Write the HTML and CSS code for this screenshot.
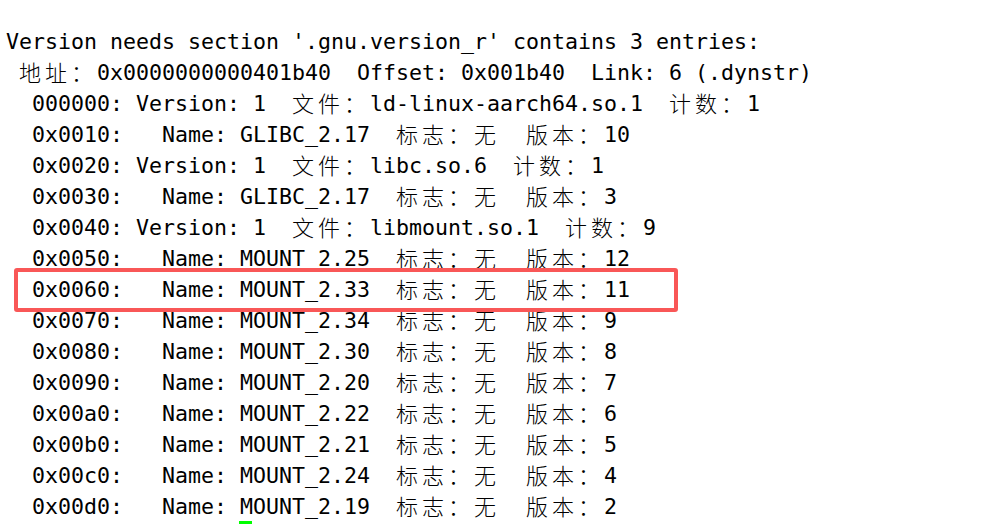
FILE: index.html
```html
<!DOCTYPE html>
<html>
<head>
<meta charset="utf-8">
<link rel="stylesheet" href="styles.css">
</head>
<body>
<div class="term">
<div class="ln">Version needs section '.gnu.version_r' contains 3 entries:</div>
<div class="ln"> <span class="w">地</span><span class="w">址</span><span class="w">：</span>0x0000000000401b40  Offset: 0x001b40  Link: 6 (.dynstr)</div>
<div class="ln">  000000: Version: 1  <span class="w">文</span><span class="w">件</span><span class="w">：</span>ld-linux-aarch64.so.1  <span class="w">计</span><span class="w">数</span><span class="w">：</span>1</div>
<div class="ln">  0x0010:   Name: GLIBC_2.17  <span class="w">标</span><span class="w">志</span><span class="w">：</span><span class="w">无</span>  <span class="w">版</span><span class="w">本</span><span class="w">：</span>10</div>
<div class="ln">  0x0020: Version: 1  <span class="w">文</span><span class="w">件</span><span class="w">：</span>libc.so.6  <span class="w">计</span><span class="w">数</span><span class="w">：</span>1</div>
<div class="ln">  0x0030:   Name: GLIBC_2.17  <span class="w">标</span><span class="w">志</span><span class="w">：</span><span class="w">无</span>  <span class="w">版</span><span class="w">本</span><span class="w">：</span>3</div>
<div class="ln">  0x0040: Version: 1  <span class="w">文</span><span class="w">件</span><span class="w">：</span>libmount.so.1  <span class="w">计</span><span class="w">数</span><span class="w">：</span>9</div>
<div class="ln">  0x0050:   Name: MOUNT_2.25  <span class="w">标</span><span class="w">志</span><span class="w">：</span><span class="w">无</span>  <span class="w">版</span><span class="w">本</span><span class="w">：</span>12</div>
<div class="ln">  0x0060:   Name: MOUNT_2.33  <span class="w">标</span><span class="w">志</span><span class="w">：</span><span class="w">无</span>  <span class="w">版</span><span class="w">本</span><span class="w">：</span>11</div>
<div class="ln">  0x0070:   Name: MOUNT_2.34  <span class="w">标</span><span class="w">志</span><span class="w">：</span><span class="w">无</span>  <span class="w">版</span><span class="w">本</span><span class="w">：</span>9</div>
<div class="ln">  0x0080:   Name: MOUNT_2.30  <span class="w">标</span><span class="w">志</span><span class="w">：</span><span class="w">无</span>  <span class="w">版</span><span class="w">本</span><span class="w">：</span>8</div>
<div class="ln">  0x0090:   Name: MOUNT_2.20  <span class="w">标</span><span class="w">志</span><span class="w">：</span><span class="w">无</span>  <span class="w">版</span><span class="w">本</span><span class="w">：</span>7</div>
<div class="ln">  0x00a0:   Name: MOUNT_2.22  <span class="w">标</span><span class="w">志</span><span class="w">：</span><span class="w">无</span>  <span class="w">版</span><span class="w">本</span><span class="w">：</span>6</div>
<div class="ln">  0x00b0:   Name: MOUNT_2.21  <span class="w">标</span><span class="w">志</span><span class="w">：</span><span class="w">无</span>  <span class="w">版</span><span class="w">本</span><span class="w">：</span>5</div>
<div class="ln">  0x00c0:   Name: MOUNT_2.24  <span class="w">标</span><span class="w">志</span><span class="w">：</span><span class="w">无</span>  <span class="w">版</span><span class="w">本</span><span class="w">：</span>4</div>
<div class="ln">  0x00d0:   Name: MOUNT_2.19  <span class="w">标</span><span class="w">志</span><span class="w">：</span><span class="w">无</span>  <span class="w">版</span><span class="w">本</span><span class="w">：</span>2</div>
<div class="highlight"></div>
<div class="cursor"></div>
</div>
</body>
</html>
```
FILE: styles.css
```css
html, body {
  margin: 0;
  padding: 0;
  background: #ffffff;
  overflow: hidden;
}
.term {
  position: relative;
  width: 989px;
  height: 524px;
  box-sizing: border-box;
  padding: 26px 0 0 6px;
  font-family: "DejaVu Sans Mono", monospace;
  font-size: 21.6px;
  color: #000000;
}
.ln {
  height: 31px;
  line-height: 31px;
  white-space: pre;
}
.w {
  display: inline-block;
  width: 26px;
  height: 31px;
  vertical-align: top;
  font-family: "Noto Sans CJK SC", sans-serif;
  font-size: 22px;
  line-height: 28px;
  font-weight: 300;
}
.highlight {
  position: absolute;
  left: 14px;
  top: 268px;
  width: 664px;
  height: 44px;
  box-sizing: border-box;
  border: 4px solid #f95757;
  border-radius: 3px;
}
.cursor {
  position: absolute;
  left: 239px;
  top: 521px;
  width: 13px;
  height: 3px;
  background: #00ff00;
}
```
